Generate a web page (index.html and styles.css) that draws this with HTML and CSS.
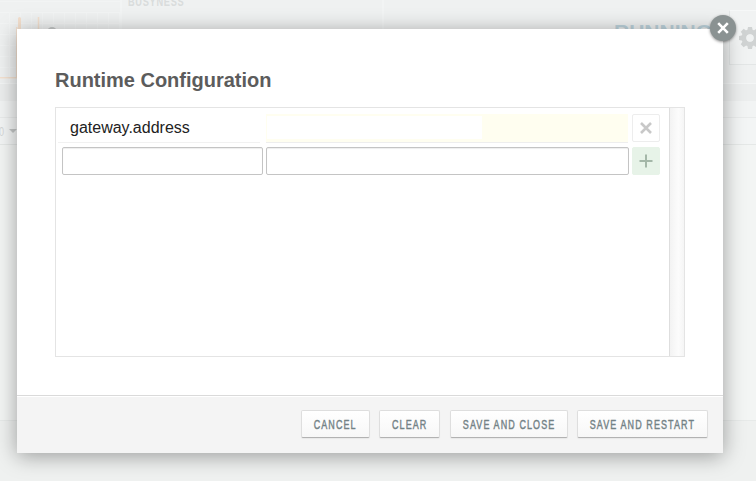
FILE: index.html
```html
<!DOCTYPE html>
<html lang="en">
<head>
<meta charset="utf-8">
<title>Runtime Configuration</title>
<link rel="stylesheet" href="styles.css">
</head>
<body>
<div class="page">
  <header class="summary">
    <div class="metric chart">
      <svg width="121" height="84" viewBox="0 0 121 84" fill="none">
        <path d="M0 77.8H16.8V27M38.5 17V32" stroke="#f4e1d0" stroke-width="1.5"/>
        <path d="M19.5 18.5V32" stroke="#f3dfcd" stroke-width="3" stroke-linecap="round"/>
        <circle cx="52" cy="32" r="5" fill="#c6c8c8"/>
      </svg>
    </div>
    <div class="metric busyness"><span>BUSYNESS</span></div>
    <div class="state"><span class="state-name">RUNNING</span>
      <div class="gear-button">
        <svg width="22" height="22" viewBox="-11 -11 22 22">
          <g fill="#d0d3d3"><path d="M-2-11H2L3-6H-3ZM-2 11H2L3 6H-3ZM-11-2V2L-6 3V-3ZM11-2V2L6 3V-3Z"/><path transform="rotate(45)" d="M-2-11H2L3-6H-3ZM-2 11H2L3 6H-3ZM-11-2V2L-6 3V-3ZM11-2V2L6 3V-3Z"/></g>
          <circle r="6" fill="none" stroke="#d0d3d3" stroke-width="5"/><circle r="3.7" fill="#f0f2f2"/>
        </svg>
      </div>
    </div>
  </header>
  <div class="strip"></div>
  <div class="filter"><span>0</span><i class="caret"></i></div>
  <main class="content"></main>
</div>
<section class="dialog" role="dialog" aria-labelledby="title">
  <button class="close" aria-label="Close"><svg width="12" height="12" viewBox="0 0 12 12"><path d="M1.2 1.2L10.8 10.8M10.8 1.2L1.2 10.8" stroke="#fff" stroke-width="2.6"/></svg></button>
  <div class="dialog-body">
    <h1 id="title">Runtime Configuration</h1>
    <div class="properties">
      <div class="rows">
        <div class="row existing">
          <div class="key">gateway.address</div>
          <div class="value"><div class="redacted"></div></div>
          <button class="remove" aria-label="Remove"><svg width="12" height="12" viewBox="0 0 12 12"><path d="M1 1L11 11M11 1L1 11" stroke="#c8c8c8" stroke-width="2.6"/></svg></button>
        </div>
        <div class="row">
          <input class="key-input" aria-label="Name">
          <input class="value-input" aria-label="Value">
          <button class="add" aria-label="Add"><svg width="14" height="14" viewBox="0 0 14 14"><path d="M7 .5V13.5M.5 7H13.5" stroke="#a4b7a8" stroke-width="2"/></svg></button>
        </div>
      </div>
      <div class="gutter"></div>
    </div>
  </div>
  <footer class="actions">
    <button class="action cancel"><span>CANCEL</span></button>
    <button class="action clear"><span>CLEAR</span></button>
    <button class="action save-close"><span>SAVE AND CLOSE</span></button>
    <button class="action save-restart"><span>SAVE AND RESTART</span></button>
  </footer>
</section>
</body>
</html>
```
FILE: styles.css
```css
* { box-sizing: border-box; }
body {
  margin: 0;
  width: 756px;
  height: 481px;
  overflow: hidden;
  position: relative;
  background: #eff1f0;
  font-family: "Liberation Sans", Arial, sans-serif;
}
button { padding: 0; font: inherit; display: flex; align-items: center; justify-content: center; }
svg { display: block; }
.page { height: 481px; display: flex; flex-direction: column; }
.summary { height: 84px; display: flex; background: #eff1f1; border-bottom: 1px solid #f4f6f6; }
.metric { border-right: 2px solid #f2f4f4; }
.chart {
  width: 122px;
  background-image: linear-gradient(90deg, #f2f4f4 1px, transparent 1px), linear-gradient(#f2f4f4 1px, transparent 1px);
  background-size: 11px 100%, 100% 11px;
  background-position: 9px 12px, 0 12px;
  background-repeat: repeat-x, repeat-y;
}
.busyness {
  width: 262px;
  padding-left: 6px;
  color: #d9dcdc;
  font-weight: bold;
  font-size: 12px;
  line-height: 5px;
  letter-spacing: 0.9px;
}
.busyness span { display: inline-block; transform: scaleX(0.77); transform-origin: left; }
.state { flex: 1; display: flex; justify-content: flex-end; }
.state-name { margin: 20px 17px 0 0; color: #bdd3dc; font-weight: bold; font-size: 21px; line-height: 23px; }
.gear-button {
  width: 27px;
  height: 55px;
  margin-top: 10px;
  padding: 16px 0 0 9px;
  overflow: hidden;
  border: 1px solid #e3e6e6;
  border-top-color: #f6f8f8;
  border-right: 0;
  background: #f1f3f3;
}
.strip { height: 17px; background: #eceeee; }
.filter {
  height: 44px;
  display: flex;
  align-items: center;
  padding-top: 17px;
  color: #d5d8d8;
  background: linear-gradient(#f2f4f4 16px, #e9ebeb 16px, #e9ebeb 17px, #f3f5f5 17px);
  border-bottom: 1px solid #e5e8e7;
  font-size: 13px;
}
.filter span { display: inline-block; width: 4px; transform: scaleX(0.7); transform-origin: left; margin-left: -1px; }
.caret { margin-left: 6px; border: 4px solid transparent; border-top-color: #c4c7c7; border-bottom: 0; }
.content { height: 276px; background: #f3f5f4; border-bottom: 1px solid #e7eae9; }

.dialog {
  position: absolute;
  left: 17px;
  top: 29px;
  width: 706px;
  height: 424px;
  display: flex;
  flex-direction: column;
  background: #fff;
  box-shadow: 0 3px 20px rgba(0, 0, 0, 0.36);
}
.close {
  position: absolute;
  top: -14px;
  right: -13px;
  width: 26px;
  height: 26px;
  border: 0;
  border-radius: 50%;
  background: #8a9292;
  box-shadow: 0 1px 3px rgba(0, 0, 0, 0.45);
}
.dialog-body { flex: 1; padding: 39px 38px 0; }
h1 { margin: 0 0 14px; color: #5c5c5c; font-size: 20px; line-height: 25px; letter-spacing: -0.01px; }
.properties { display: flex; width: 630px; height: 250px; border: 1px solid #e4e4e4; }
.rows { flex: 1; padding-top: 6px; }
.row { display: flex; padding-left: 6px; height: 28px; margin-bottom: 5px; }
.existing { padding-left: 2px; }
.key {
  width: 202px;
  height: 29px;
  padding-left: 12px;
  margin-right: 6px;
  border-bottom: 1px solid #f1f1f1;
  color: #222;
  font-size: 16px;
  line-height: 27px;
}
.value { width: 362px; height: 29px; margin-right: 4px; padding: 2px 1px; background: #fffef0; border-bottom: 1px solid #eee; }
.redacted { width: 215px; height: 23px; background: #fff; }
input { border: 1px solid #c4c4c4; border-radius: 2px; padding: 0; background: #fff; box-shadow: inset 0 1px 1px #eee; }
.key-input { width: 201px; margin-right: 3px; }
.value-input { width: 363px; margin-right: 3px; }
.remove, .add { width: 28px; height: 28px; border: 1px solid #ededed; border-radius: 2px; background: #fff; }
.add { border-color: #e7f3e8; background: #e7f3e8; }
.gutter { width: 15px; border-left: 1px solid #dedede; background: linear-gradient(90deg, #f3f3f3, #fcfcfc 60%, #f5f5f5); }
.actions {
  height: 58px;
  display: flex;
  justify-content: flex-end;
  padding: 14px 15px 0 0;
  border-top: 1px solid #dadada;
  background: #f4f4f4;
  box-shadow: inset 0 1px #fff;
}
.action {
  height: 28px;
  margin-left: 9px;
  border: 1px solid #dedede;
  border-bottom-color: #b2b2b2;
  border-radius: 2px;
  background: linear-gradient(#fff, #f7f7f7);
  box-shadow: 0 1px 1px rgba(0, 0, 0, 0.05);
  color: #738286;
  font-size: 13px;
  letter-spacing: 1.6px;
  -webkit-text-stroke: 0.45px #738286;
  white-space: nowrap;
}
.action span { display: block; flex: none; transform: scaleX(0.69); padding-top: 1px; }
.cancel { width: 69px; }
.clear { width: 61px; }
.save-close { width: 118px; margin-left: 10px; }
.save-restart { width: 131px; }
```
